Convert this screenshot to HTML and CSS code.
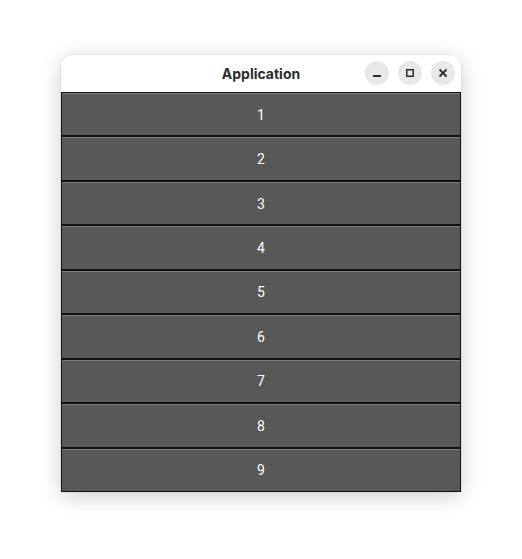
FILE: index.html
```html
<!DOCTYPE html>
<html>
<head>
<meta charset="utf-8">
<link rel="stylesheet" href="styles.css">
</head>
<body>
<div class="window">
  <div class="header">
    <div class="title">Application</div>
    <div class="controls">
      <div class="ctl"><svg width="10" height="10" viewBox="0 0 10 10"><rect x="1" y="7" width="8" height="2" fill="#2e2e2e"/></svg></div>
      <div class="ctl"><svg width="10" height="10" viewBox="0 0 10 10"><rect x="1.75" y="1.75" width="6.5" height="6.5" fill="none" stroke="#2e2e2e" stroke-width="1.5"/></svg></div>
      <div class="ctl"><svg width="10" height="10" viewBox="0 0 10 10"><path d="M1.5 1.5 L8.5 8.5 M8.5 1.5 L1.5 8.5" stroke="#2e2e2e" stroke-width="1.8"/></svg></div>
    </div>
  </div>
  <div class="list">
    <div class="btn">1</div>
    <div class="btn">2</div>
    <div class="btn">3</div>
    <div class="btn">4</div>
    <div class="btn">5</div>
    <div class="btn">6</div>
    <div class="btn">7</div>
    <div class="btn">8</div>
    <div class="btn">9</div>
  </div>
</div>
</body>
</html>
```
FILE: styles.css
```css
html, body {
  margin: 0;
  padding: 0;
  background: #ffffff;
}
body {
  width: 522px;
  height: 559px;
  padding-top: 55px;
  padding-left: 61px;
  box-sizing: border-box;
}
.window {
  width: 400px;
  height: 437px;
  border-radius: 12px 12px 0 0;
  background: #ffffff;
  box-shadow: 0 4px 22px rgba(0,0,0,0.2), 0 0 0 1px rgba(0,0,0,0.03);
  display: flex;
  flex-direction: column;
  overflow: hidden;
}
.header {
  height: 37px;
  flex: none;
  display: flex;
  align-items: center;
  justify-content: center;
  position: relative;
  background: #ffffff;
}
.title {
  font-family: Inter, "Liberation Sans", sans-serif;
  font-weight: 700;
  font-size: 14px;
  color: #2e2e2e;
  padding-bottom: 1px;
}
.controls {
  position: absolute;
  right: 6px;
  top: 6px;
  display: flex;
  gap: 9px;
}
.ctl {
  width: 24px;
  height: 24px;
  border-radius: 50%;
  background: #e8e8e8;
  display: flex;
  align-items: center;
  justify-content: center;
}
.list {
  flex: 1;
  display: flex;
  flex-direction: column;
}
.btn {
  flex: 1;
  background: #585858;
  border: 1px solid #111111;
  box-shadow: inset 0 1px 0 rgba(255,255,255,0.22);
  display: flex;
  align-items: center;
  justify-content: center;
  padding-top: 1px;
  color: #ffffff;
  font-family: Roboto, "Liberation Sans", sans-serif;
  font-size: 14px;
}
```
